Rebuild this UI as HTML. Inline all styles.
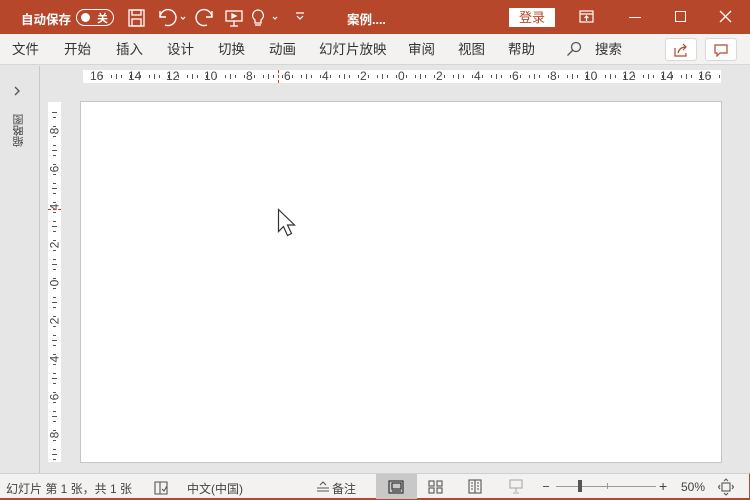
<!DOCTYPE html>
<html><head><meta charset="utf-8">
<style>
*{margin:0;padding:0;box-sizing:border-box}
body{width:750px;height:500px;overflow:hidden;background:#e6e6e6;font-family:"Liberation Sans","Noto Sans CJK SC",sans-serif;position:relative;font-size:13px;color:#333}
.abs{position:absolute}
#title{left:0;top:0;width:750px;height:34px;background:#b7472a;color:#fff}
#tabs{left:0;top:34px;width:750px;height:31px;background:#f3f2f1;border-bottom:1px solid #d6d6d6}
#tabs span{position:absolute;top:4px;font-size:13.5px;color:#333}
#left{left:0;top:66px;width:40px;height:408px;background:#e6e6e6;border-right:1px solid #c8c8c8}
#slide{left:80px;top:101px;width:642px;height:362px;background:#fff;border:1px solid #c6c6c6}
#hr{left:83px;top:70px;width:638px;height:13px;background:#fff}
#vr{left:48px;top:102px;width:13px;height:360px;background:#fff}
.t{position:absolute;background:#555}
.n{position:absolute;font-size:12px;color:#444;line-height:12px}
#status{left:0;top:473px;width:750px;height:27px;background:#f3f2f1;border-top:1px solid #d0d0d0;border-bottom:2px solid #b7472a;border-right:1px solid #b7472a}
#status span{position:absolute;top:6px;font-size:12px;color:#444}
</style></head><body>
<div id="title" class="abs">
 <span class="abs" style="left:21px;top:9px;font-size:12.5px;font-weight:bold">自动保存</span>
 <div class="abs" style="left:76px;top:9px;width:38px;height:17px;border:1.5px solid #fff;border-radius:9px"></div>
 <div class="abs" style="left:81px;top:13px;width:9px;height:9px;background:#fff;border-radius:50%"></div>
 <span class="abs" style="left:97px;top:10px;font-size:11px;font-weight:bold">关</span>
 <svg class="abs" style="left:127px;top:8px" width="20" height="20" fill="none" stroke="#fff" stroke-width="1.3"><rect x="2" y="2" width="15" height="16"/><rect x="5" y="2" width="9" height="5"/><rect x="5" y="11" width="9" height="7"/></svg>
 <svg class="abs" style="left:157px;top:8px" width="30" height="20" fill="none" stroke="#fff" stroke-width="1.4"><path d="M3 3v6h6"/><path d="M3 9a8 8 0 1 1 5 8"/><path d="M24 9l2 2 2-2" stroke-width="1.2"/></svg>
 <svg class="abs" style="left:195px;top:8px" width="20" height="20" fill="none" stroke="#fff" stroke-width="1.4"><path d="M17 3v6h-6"/><path d="M17 9a8 8 0 1 0-5 8"/></svg>
 <svg class="abs" style="left:224px;top:8px" width="20" height="20" fill="none" stroke="#fff" stroke-width="1.3"><rect x="2" y="3" width="16" height="10"/><path d="M8 6l4 2-4 2z" fill="#fff"/><path d="M10 13v5M6 18h8"/></svg>
 <svg class="abs" style="left:250px;top:8px" width="34" height="20" fill="none" stroke="#fff" stroke-width="1.3"><path d="M8 2a5.5 5.5 0 0 0-3 10v3h6v-3a5.5 5.5 0 0 0-3-10z"/><path d="M5 17h6"/><path d="M23 9l2 2 2-2" stroke-width="1.2"/></svg>
 <svg class="abs" style="left:294px;top:10px" width="12" height="12" fill="none" stroke="#fff" stroke-width="1.2"><path d="M2 3h8M3 6l3 3 3-3"/></svg>
 <span class="abs" style="left:347px;top:9px;font-size:12.5px;font-weight:bold">案例....</span>
 <div class="abs" style="left:509px;top:8px;width:46px;height:19px;background:#fff;color:#b7472a;font-size:13px;text-align:center;line-height:19px">登录</div>
 <svg class="abs" style="left:579px;top:10px" width="16" height="14" fill="none" stroke="#fff" stroke-width="1.2"><rect x="1" y="1" width="13" height="11"/><path d="M1 4h13M7.5 11V6M5.5 8l2-2 2 2"/></svg>
 <div class="abs" style="left:629px;top:17px;width:12px;height:1.3px;background:#fff"></div>
 <div class="abs" style="left:675px;top:11px;width:11px;height:11px;border:1.3px solid #fff"></div>
 <svg class="abs" style="left:719px;top:10px" width="13" height="13" stroke="#fff" stroke-width="1.3"><path d="M1 1l11 11M12 1L1 12"/></svg>
</div>
<div id="tabs" class="abs">
 <span style="left:12px">文件</span><span style="left:64px">开始</span><span style="left:116px">插入</span><span style="left:167px">设计</span><span style="left:218px">切换</span><span style="left:269px">动画</span><span style="left:319px">幻灯片放映</span><span style="left:408px">审阅</span><span style="left:458px">视图</span><span style="left:508px">帮助</span>
 <svg class="abs" style="left:566px;top:7px" width="16" height="16" fill="none" stroke="#555" stroke-width="1.3"><circle cx="10" cy="6" r="4.5"/><path d="M7 9l-5.5 5.5"/></svg>
 <span style="left:595px">搜索</span>
 <div class="abs" style="left:665px;top:4px;width:32px;height:23px;background:#fff;border:1px solid #d8d8d8;border-radius:3px"></div>
 <svg class="abs" style="left:673px;top:9px" width="16" height="14" fill="none" stroke="#b7472a" stroke-width="1.2"><path d="M2 5v8h11v-3"/><path d="M5 10c1-4 4-6 8-6M10 1l3 3-3 3"/></svg>
 <div class="abs" style="left:705px;top:4px;width:32px;height:23px;background:#fff;border:1px solid #d8d8d8;border-radius:3px"></div>
 <svg class="abs" style="left:713px;top:9px" width="16" height="14" fill="none" stroke="#b7472a" stroke-width="1.2"><path d="M2 2h12v8H7l-3 3v-3H2z"/></svg>
</div>
<div id="left" class="abs">
 <svg class="abs" style="left:13px;top:20px" width="8" height="10" fill="none" stroke="#555" stroke-width="1.4"><path d="M2 1l4 4-4 4"/></svg>
 <div class="abs" style="left:11px;top:48px;font-size:11px;writing-mode:vertical-rl;transform:rotate(180deg);color:#444">缩略图</div>
</div>
<div id="hr" class="abs"></div>
<div id="vr" class="abs"></div>
<div id="slide" class="abs"></div>
<div class="abs" style="left:278px;top:70px;width:1px;height:13px;border-left:1px dashed #d04020"></div>
<div class="abs" style="left:48px;top:209px;width:13px;height:1px;border-top:1px dashed #d04020"></div>
<svg class="abs" style="left:277px;top:208px" width="22" height="32"><path d="M1.5 1.5v22l5-5 4 9 4-2-4-8.5h7z" fill="#fff" stroke="#333" stroke-width="1.2"/></svg>
<div id="status" class="abs">
 <span style="left:6px">幻灯片 第 1 张，共 1 张</span>
 <svg class="abs" style="left:154px;top:7px" width="15" height="14" fill="none" stroke="#555" stroke-width="1.1"><path d="M1 1h5v12H1zM6 1h7v12H6"/><path d="M8 8l2 2 3-5"/></svg>
 <span style="left:187px">中文(中国)</span>
 <svg class="abs" style="left:316px;top:7px" width="14" height="13" fill="none" stroke="#555" stroke-width="1.1"><path d="M4 4l3-3 3 3M1 7h12M1 10h12"/></svg>
 <span style="left:332px">备注</span>
 <div class="abs" style="left:376px;top:0;width:41px;height:25px;background:#c8c8c8"></div>
 <svg class="abs" style="left:388px;top:6px" width="16" height="14" fill="none" stroke="#333" stroke-width="1.2"><rect x="1" y="1" width="14" height="12"/><rect x="4" y="3" width="9" height="6"/><path d="M4 11h9"/></svg>
 <svg class="abs" style="left:428px;top:6px" width="15" height="14" fill="none" stroke="#555" stroke-width="1.1"><rect x="1" y="1" width="5" height="5"/><rect x="9" y="1" width="5" height="5"/><rect x="1" y="8" width="5" height="5"/><rect x="9" y="8" width="5" height="5"/></svg>
 <svg class="abs" style="left:468px;top:5px" width="15" height="15" fill="none" stroke="#555" stroke-width="1.1"><rect x="1" y="1" width="12" height="13"/><path d="M7 1v13M3 4h2M3 7h2M3 10h2M9 4h2M9 7h2M9 10h2"/></svg>
 <svg class="abs" style="left:509px;top:5px" width="14" height="15" fill="none" stroke="#aaa" stroke-width="1.1"><rect x="1" y="1" width="12" height="8"/><path d="M7 9v4M4 14h6"/></svg>
 <div class="abs" style="left:543px;top:12px;width:6px;height:1px;background:#555"></div>
 <div class="abs" style="left:556px;top:12px;width:100px;height:1px;background:#999"></div>
 <div class="abs" style="left:578px;top:6px;width:4px;height:12px;background:#555"></div>
 <div class="abs" style="left:607px;top:9px;width:1px;height:6px;background:#999"></div>
 <span style="left:659px;top:4px;font-size:14px">+</span>
 <span style="left:681px">50%</span>
 <svg class="abs" style="left:718px;top:4px" width="16" height="18" fill="none" stroke="#555" stroke-width="1.1"><rect x="4" y="5" width="8" height="8"/><path d="M6 3l2-2 2 2M6 15l2 2 2-2M2 7l-1.5 2L2 11M14 7l1.5 2-1.5 2"/></svg>
</div>
<script>
(function(){
 var hr=document.getElementById('hr'),vr=document.getElementById('vr'),h='';
 for(var u=-17;u<=17;u++){
  var x=318+u*19;
  if(x<0||x>638)continue;
  if(u%2===0){var v=Math.abs(u);h+='<div class="n" style="left:'+(x-(v>=10?7:3))+'px;top:0px">'+v+'</div>';}
  else h+='<div class="t" style="left:'+x+'px;top:4px;width:1px;height:5px"></div>';
  for(var q=1;q<4;q++){if(q==2)continue;var xx=x+q*19/4;if(xx<638)h+='<div class="t" style="left:'+Math.round(xx)+'px;top:5px;width:1px;height:3px"></div>';}
 }
 hr.innerHTML=h;h='';
 for(var u=-9;u<=9;u++){
  var y=181+u*19;
  if(y<0||y>360)continue;
  if(u%2===0){var v=Math.abs(u);h+='<div class="n" style="left:0px;top:'+(y-6)+'px;transform:rotate(-90deg);width:13px;text-align:center">'+v+'</div>';}
  else h+='<div class="t" style="top:'+y+'px;left:4px;height:1px;width:5px"></div>';
  for(var q=1;q<4;q++){if(q==2)continue;var yy=y+q*19/4;if(yy<360)h+='<div class="t" style="top:'+Math.round(yy)+'px;left:5px;height:1px;width:3px"></div>';}
 }
 vr.innerHTML=h;
})();
</script>
</body></html>
